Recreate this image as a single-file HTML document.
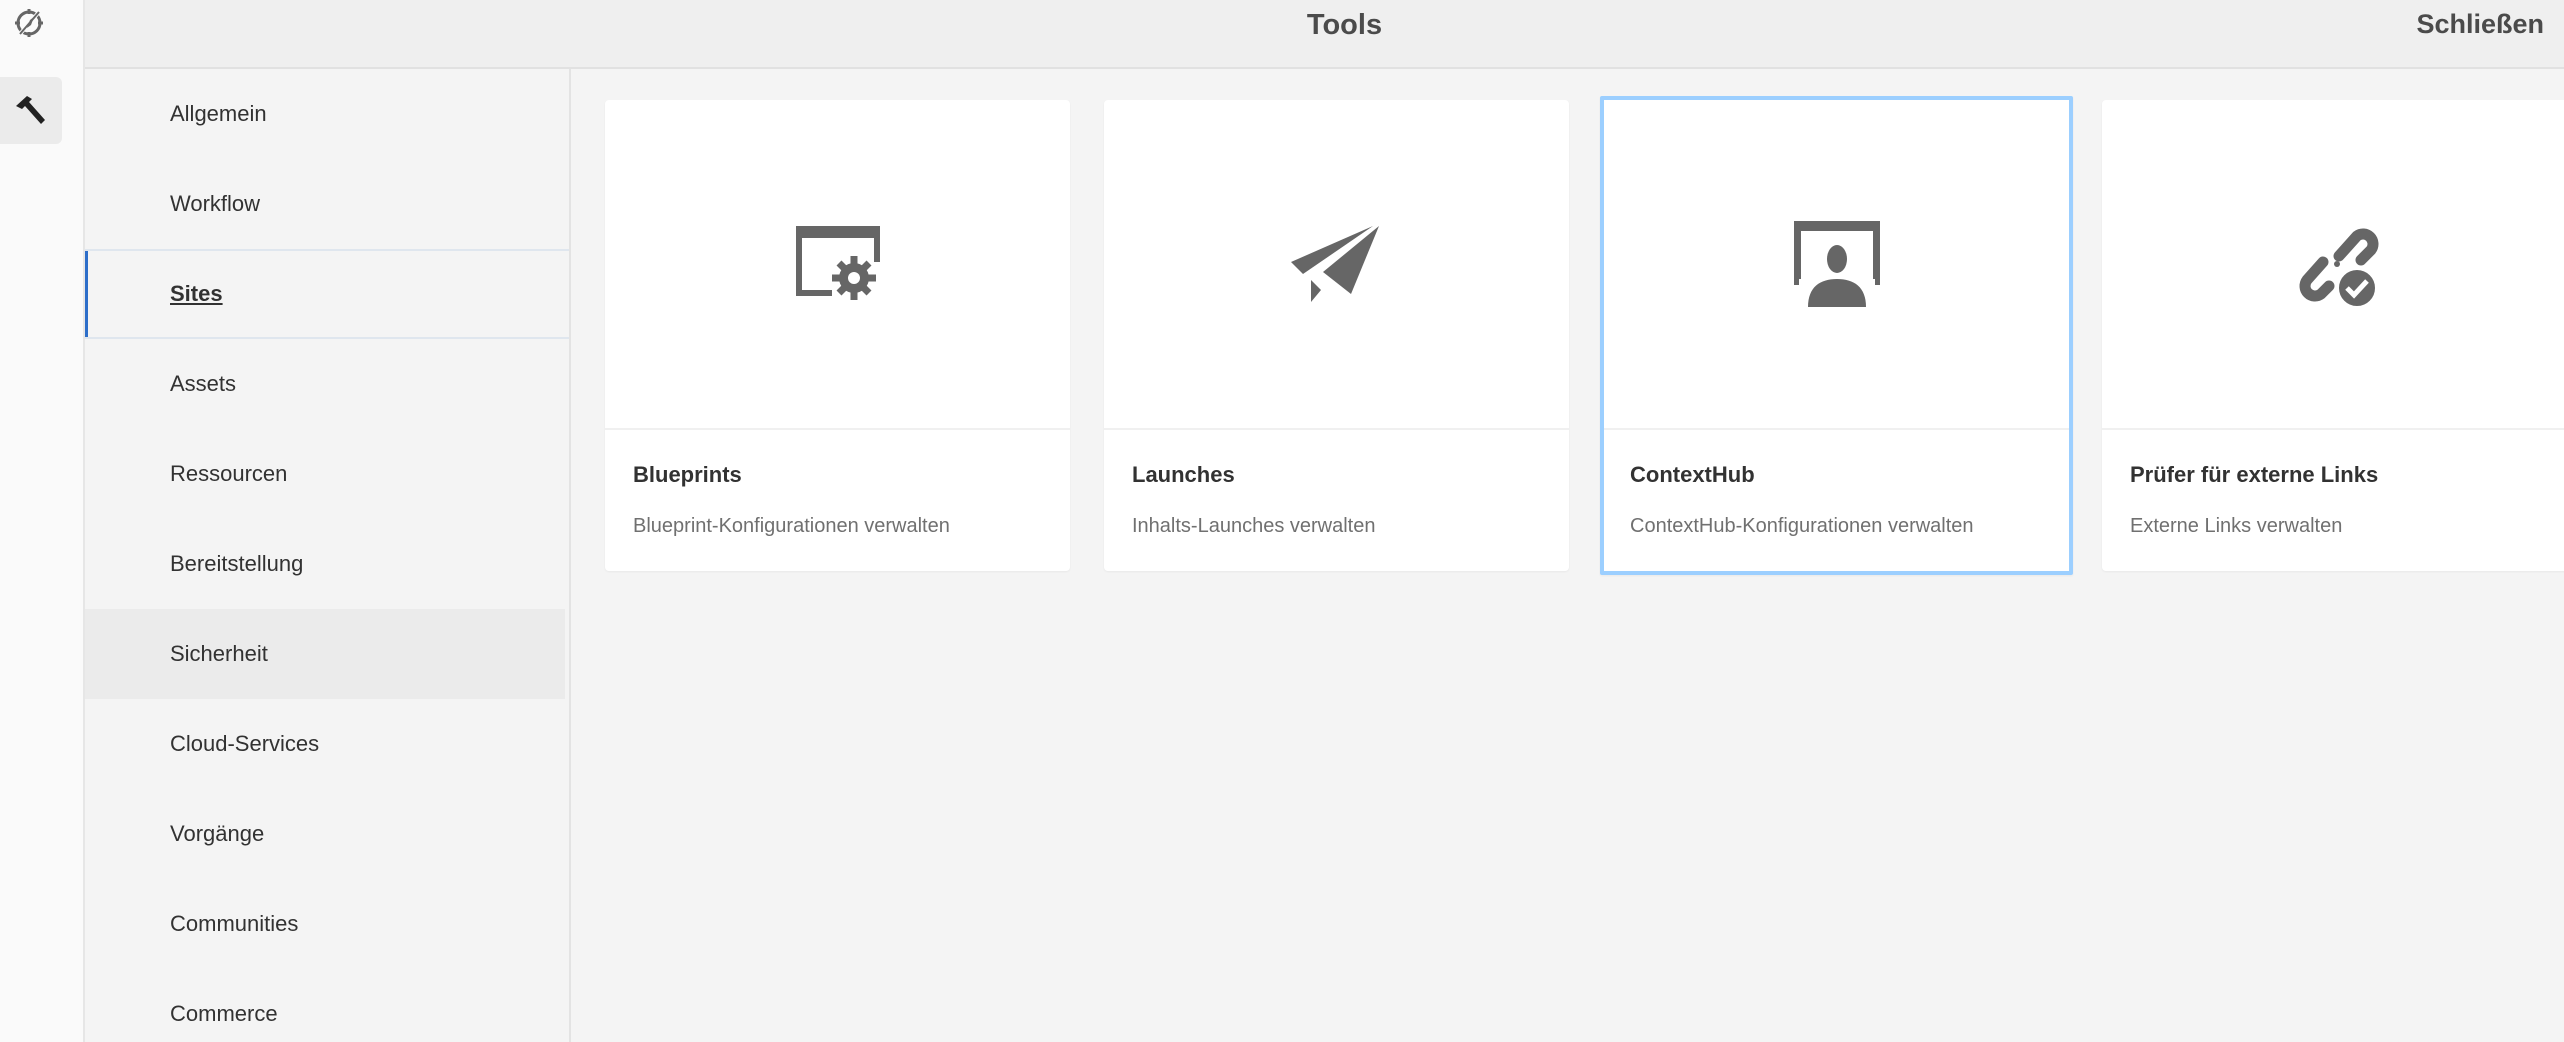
<!DOCTYPE html>
<html><head><meta charset="utf-8"><style>
*{margin:0;padding:0;box-sizing:border-box}
html,body{width:2564px;height:1042px;overflow:hidden}
body{background:#f4f4f4;font-family:"Liberation Sans",sans-serif;position:relative}
.rail{position:absolute;left:0;top:0;width:85px;height:1042px;background:#fafafa;border-right:2px solid #e6e6e6}
.hbtn{position:absolute;left:0;top:77px;width:62px;height:67px;background:#ebebeb;border-radius:0 6px 6px 0}
.header{position:absolute;left:85px;top:0;right:0;height:69px;background:#efefef;border-bottom:2px solid #e1e1e1}
.title{position:absolute;left:40px;right:0;top:9px;text-align:center;font-size:29px;font-weight:bold;color:#4b4b4b}
.close{position:absolute;right:20px;top:9px;font-size:27px;font-weight:bold;color:#4b4b4b}
.nav{position:absolute;left:85px;top:69px;width:486px;height:973px;background:#f4f4f4;border-right:2px solid #e3e3e3}
.item{height:90px;line-height:90px;padding-left:85px;font-size:22px;color:#323232;position:relative}
.item.sel{font-weight:bold;text-decoration:underline;border-top:2px solid #dfe6ee;border-bottom:2px solid #dfe6ee;line-height:86px}
.item.sel:before{content:"";position:absolute;left:0;top:0;bottom:0;width:3px;background:#2d6ec9}
.item.hov{background:#ebebeb;margin-right:4px}
.card{position:absolute;top:100px;height:471px;background:#fff;border-radius:4px;box-shadow:0 1px 2px rgba(0,0,0,.05)}
.card .ic{height:330px;border-bottom:2px solid #f0f0f0;display:flex;align-items:center;justify-content:center}
.card h3{position:absolute;left:28px;top:362px;font-size:22px;color:#323232}
.card p{position:absolute;left:28px;top:415px;font-size:20px;color:#707070}
.card.sel{border:4px solid #9ccfff;top:96px;height:479px;border-radius:2px}
.card.sel .ic{height:330px}
.card.sel h3{left:26px;top:362px}.card.sel p{left:26px;top:415px}
</style></head><body>
<div class="rail">
<svg style="position:absolute;left:12px;top:6px" width="34" height="34" viewBox="0 0 34 34"><circle cx="17" cy="17" r="11" fill="none" stroke="#666" stroke-width="3"/><path d="M17 3v5M17 26v5M3 17h5M26 17h5" stroke="#666" stroke-width="3"/><path d="M27 6L8 28" stroke="#fafafa" stroke-width="4"/><path d="M27 6L8 28" stroke="#666" stroke-width="2"/><path d="M22 11l-3 8-4 3 3-8z" fill="#666"/></svg>
<div class="hbtn"><svg style="position:absolute;left:13px;top:17px" width="36" height="36" viewBox="0 0 36 36"><path d="M3 12L14 2l5 3-3 3 16 18-4 4L12 12l-3 3z" fill="#222"/></svg></div>
</div>
<div class="header"><div class="title">Tools</div><div class="close">Schließen</div></div>
<div class="nav">
<div class="item">Allgemein</div><div class="item">Workflow</div><div class="item sel">Sites</div><div class="item">Assets</div><div class="item">Ressourcen</div><div class="item">Bereitstellung</div><div class="item hov">Sicherheit</div><div class="item">Cloud-Services</div><div class="item">Vorgänge</div><div class="item">Communities</div><div class="item">Commerce</div>
</div>
<div class="card" style="left:605px;width:465px"><div class="ic"><svg width="92" height="92" viewBox="0 0 92 92"><path d="M4 8h84v36h-6V20H10v52h30v6H4z" fill="#666"/><g transform="translate(62,60)" fill="#666"><circle r="15"/><g stroke="#666" stroke-width="7"><path d="M0-22V22M-22 0H22M-15-15L15 15M15-15L-15 15"/></g><circle r="6" fill="#fff"/></g></svg></div><h3>Blueprints</h3><p>Blueprint-Konfigurationen verwalten</p></div>
<div class="card" style="left:1104px;width:465px"><div class="ic"><svg width="96" height="80" viewBox="0 0 96 80"><path d="M84 2L2 38l12 12z" fill="#666"/><path d="M90 2L62 70 34 48z" fill="#666"/><path d="M22 56l10 10-10 12z" fill="#666"/></svg></div><h3>Launches</h3><p>Inhalts-Launches verwalten</p></div>
<div class="card sel" style="left:1600px;width:473px"><div class="ic"><svg width="90" height="90" viewBox="0 0 90 90"><path d="M2 2h86v64h-5v-6h-2V12H9v48H7v6H2z" fill="#666"/><ellipse cx="45" cy="40" rx="10" ry="14" fill="#666"/><path d="M16 88c0-20 12-28 29-28s29 8 29 28z" fill="#666"/></svg></div><h3>ContextHub</h3><p>ContextHub-Konfigurationen verwalten</p></div>
<div class="card" style="left:2102px;width:470px"><div class="ic"><svg width="96" height="96" viewBox="0 0 96 96"><g fill="none" stroke="#666" stroke-width="11" stroke-linecap="round"><path d="M34 46L18 64a10 10 0 0 0 14 14l8-8"/><path d="M50 40l18-20a10 10 0 0 1 14 14l-10 10"/></g><circle cx="48" cy="48" r="3" fill="#666"/><circle cx="68" cy="72" r="20" fill="#666" stroke="#fff" stroke-width="4"/><path d="M58 72l7 7 13-14" fill="none" stroke="#fff" stroke-width="5"/></svg></div><h3>Prüfer für externe Links</h3><p>Externe Links verwalten</p></div>
</body></html>
